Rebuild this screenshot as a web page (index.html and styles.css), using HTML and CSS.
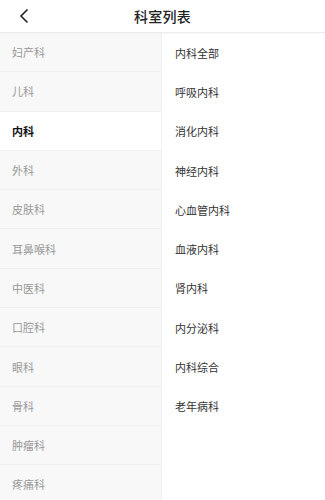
FILE: index.html
```html
<!DOCTYPE html>
<html lang="zh">
<head>
<meta charset="utf-8">
<link rel="stylesheet" href="styles.css">
</head>
<body>
<div class="page">
  <header class="topbar">
    <span class="back">
      <svg width="12" height="16" viewBox="0 0 12 16"><path d="M9.5 1.5 L3 8 L9.5 14.5" fill="none" stroke="#222" stroke-width="1.6"/></svg>
    </span>
    <h1 class="title">科室列表</h1>
  </header>
  <div class="body">
    <ul class="cats">
      <li class="cat">妇产科</li>
      <li class="cat">儿科</li>
      <li class="cat active">内科</li>
      <li class="cat">外科</li>
      <li class="cat">皮肤科</li>
      <li class="cat">耳鼻喉科</li>
      <li class="cat">中医科</li>
      <li class="cat">口腔科</li>
      <li class="cat">眼科</li>
      <li class="cat">骨科</li>
      <li class="cat">肿瘤科</li>
      <li class="cat">疼痛科</li>
    </ul>
    <ul class="subs">
      <li class="sub">内科全部</li>
      <li class="sub">呼吸内科</li>
      <li class="sub">消化内科</li>
      <li class="sub">神经内科</li>
      <li class="sub">心血管内科</li>
      <li class="sub">血液内科</li>
      <li class="sub">肾内科</li>
      <li class="sub">内分泌科</li>
      <li class="sub">内科综合</li>
      <li class="sub">老年病科</li>
    </ul>
  </div>
</div>
</body>
</html>
```
FILE: styles.css
```css
* { box-sizing: border-box; }
html, body { margin: 0; padding: 0; background: #fff; }
body {
  font-family: "Noto Sans CJK SC", "Noto Sans", sans-serif;
  width: 325px;
  height: 500px;
  overflow: hidden;
}
.page { display: flex; flex-direction: column; height: 500px; }
.topbar {
  height: 33px;
  flex: none;
  display: flex;
  align-items: center;
  justify-content: center;
  position: relative;
  border-bottom: 1px solid #ececec;
  box-shadow: 0 1px 2px rgba(0,0,0,0.03);
}
.back {
  position: absolute;
  left: 18px;
  top: 8px;
  display: flex;
}
.title {
  margin: 0;
  font-size: 14px;
  font-weight: 500;
  color: #222;
  letter-spacing: 0.3px;
}
.body { display: flex; flex: 1; min-height: 0; }
.cats, .subs { list-style: none; margin: 0; padding: 0; }
.cats {
  width: 162px;
  flex: none;
  background: #f8f8f8;
  border-right: 1px solid #f0f0f0;
}
.cat {
  height: 39.3px;
  display: flex;
  align-items: center;
  padding-left: 12px;
  font-size: 11px;
  color: #999;
  border-bottom: 1px solid #f0f0f0;
}
.cat.active {
  background: #fff;
  color: #111;
  font-weight: 700;
}
.subs { flex: 1; }
.sub {
  height: 39.3px;
  display: flex;
  align-items: center;
  padding-left: 13px;
  font-size: 11px;
  color: #333;
}
```
